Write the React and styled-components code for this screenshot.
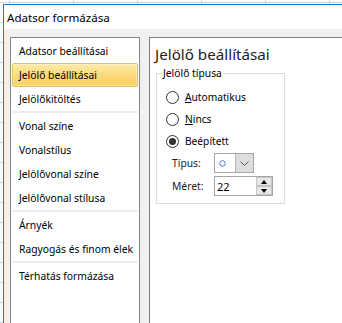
import React from "react";
import styled, { createGlobalStyle, css } from "styled-components";

const GlobalStyle = createGlobalStyle`
  html, body { margin: 0; padding: 0; }
  body { font-family: "Noto Sans", "Open Sans", sans-serif; }
  * { box-sizing: border-box; }
`;

const Page = styled.div`
  width: 342px;
  height: 323px;
  overflow: hidden;
  padding: 4px 0 0 3px;
  background-color: #ffffff;
  background-image:
    repeating-linear-gradient(90deg, transparent 0 9px, #d4d4d4 9px 10px, transparent 10px 64px),
    repeating-linear-gradient(180deg, transparent 0 2px, #d4d4d4 2px 3px, transparent 3px 20px);
`;

const Dialog = styled.div`
  height: 100%;
  display: flex;
  flex-direction: column;
  border-top: 1px solid #1979ca;
  border-left: 1px solid #1979ca;
  background: #f0f0f0;
`;

const TitleBar = styled.div`
  height: 24px;
  flex-shrink: 0;
  display: flex;
  align-items: center;
  padding-left: 3px;
  background: #ffffff;
  color: #000;
  font-size: 11.6px;
`;

const Body = styled.div`
  flex: 1;
  display: flex;
  gap: 9px;
  padding: 8px 0 0 6px;
  min-height: 0;
`;

const List = styled.div`
  width: 130px;
  flex-shrink: 0;
  border: 1px solid #828790;
  border-bottom: none;
  background: #fff;
  padding: 1px;
  display: flex;
  flex-direction: column;
`;

const Item = styled.div`
  height: 24px;
  display: flex;
  align-items: center;
  padding-left: 6px;
  border: 1px solid transparent;
  border-radius: 2px;
  font-size: 10.3px;
  color: #000;
  white-space: nowrap;
  ${(p) =>
    p.$selected &&
    css`
      border-color: #e2bf62;
      background: linear-gradient(#fdeaa8, #fbd877 55%, #fad266);
      box-shadow: inset 0 0 0 1px rgba(255, 255, 255, 0.35);
    `}
`;

const Separator = styled.div`
  height: 2px;
  margin-bottom: 1px;
  background: #eeeef2;
`;

const Panel = styled.div`
  flex: 1;
  border: 1px solid #7f7f7f;
  border-right: none;
  border-bottom: none;
  background: #fff;
  padding: 6px 0 0 5px;
`;

const Heading = styled.h2`
  margin: 0;
  font-size: 15.2px;
  line-height: 21px;
  font-weight: 400;
  color: #1e1e1e;
  white-space: nowrap;
`;

const Group = styled.div`
  position: relative;
  width: 129px;
  margin: 8px 0 0 1px;
  border: 1px solid #dcdcdc;
  padding: 12px 0 7px 9px;
  display: flex;
  flex-direction: column;
`;

const Legend = styled.span`
  position: absolute;
  top: -8px;
  left: 4px;
  padding: 0 2px;
  background: #fff;
  font-size: 10.3px;
  line-height: 15px;
  color: #000;
  white-space: nowrap;
`;

const RadioRow = styled.label`
  height: 22px;
  display: flex;
  align-items: center;
  gap: 6px;
  font-size: 10.2px;
  color: #000;
`;

const RadioCircle = styled.span`
  width: 13px;
  height: 13px;
  border: 1px solid #333;
  border-radius: 50%;
  background: #fff;
  display: grid;
  place-items: center;
  flex-shrink: 0;
  &::after {
    content: "";
    width: 7px;
    height: 7px;
    border-radius: 50%;
    background: ${(p) => (p.$checked ? "#333" : "transparent")};
  }
`;

const FieldRow = styled.div`
  height: 20px;
  display: flex;
  align-items: center;
  padding-left: 6px;
  margin-top: ${(p) => p.$gap}px;
  font-size: 10.3px;
  color: #1b1b1b;
`;

const FieldLabel = styled.span`
  width: 42px;
  flex-shrink: 0;
`;

const Combo = styled.div`
  width: 40px;
  height: 20px;
  display: flex;
  border: 1px solid #a6a6a6;
  background: #fff;
`;

const ComboValue = styled.div`
  flex: 1;
  display: flex;
  align-items: center;
  padding-left: 4px;
`;

const ComboButton = styled.div`
  width: 18px;
  display: grid;
  place-items: center;
  background: #dedede;
  border-left: 1px solid #b4b4b4;
`;

const Spin = styled.div`
  width: 59px;
  height: 20px;
  display: flex;
  border: 1px solid #a6a6a6;
  background: #fff;
`;

const SpinText = styled.div`
  flex: 1;
  display: flex;
  align-items: center;
  padding-left: 2px;
  font-size: 11px;
  color: #000;
`;

const SpinButtons = styled.div`
  width: 16px;
  display: flex;
  flex-direction: column;
`;

const SpinButton = styled.div`
  flex: 1;
  display: grid;
  place-items: center;
  background: #e6e6e6;
  border: 1px solid #c6c6c6;
  &::after {
    content: "";
    width: 0;
    height: 0;
    border-left: 3.5px solid transparent;
    border-right: 3.5px solid transparent;
    ${(p) =>
      p.$down
        ? css`border-top: 4px solid #000;`
        : css`border-bottom: 4px solid #000;`}
  }
`;

const items = [
  ["Adatsor beállításai", "Jelölő beállításai", "Jelölőkitöltés"],
  ["Vonal színe", "Vonalstílus", "Jelölővonal színe", "Jelölővonal stílusa"],
  ["Árnyék", "Ragyogás és finom élek"],
  ["Térhatás formázása"],
];

export default function App() {
  return (
    <>
      <GlobalStyle />
      <Page>
        <Dialog>
          <TitleBar>Adatsor formázása</TitleBar>
          <Body>
            <List>
              {items.map((group, gi) => (
                <React.Fragment key={gi}>
                  {gi > 0 && <Separator />}
                  {group.map((t) => (
                    <Item key={t} $selected={t === "Jelölő beállításai"}>
                      {t}
                    </Item>
                  ))}
                </React.Fragment>
              ))}
            </List>
            <Panel>
              <Heading>Jelölő beállításai</Heading>
              <Group>
                <Legend>Jelölő típusa</Legend>
                <RadioRow>
                  <RadioCircle />
                  <span>
                    <u>A</u>utomatikus
                  </span>
                </RadioRow>
                <RadioRow>
                  <RadioCircle />
                  <span>
                    <u>N</u>incs
                  </span>
                </RadioRow>
                <RadioRow>
                  <RadioCircle $checked />
                  <span>Beépített</span>
                </RadioRow>
                <FieldRow $gap={1}>
                  <FieldLabel>Típus:</FieldLabel>
                  <Combo>
                    <ComboValue>
                      <svg width="7" height="7" viewBox="0 0 7 7">
                        <circle cx="3.5" cy="3.5" r="2.8" fill="none" stroke="#4a7bd0" strokeWidth="1" />
                      </svg>
                    </ComboValue>
                    <ComboButton>
                      <svg width="9" height="5" viewBox="0 0 9 5">
                        <path d="M0.5 0.5 L4.5 4.5 L8.5 0.5" fill="none" stroke="#555" strokeWidth="1" />
                      </svg>
                    </ComboButton>
                  </Combo>
                </FieldRow>
                <FieldRow $gap={3}>
                  <FieldLabel>Méret:</FieldLabel>
                  <Spin>
                    <SpinText>22</SpinText>
                    <SpinButtons>
                      <SpinButton />
                      <SpinButton $down />
                    </SpinButtons>
                  </Spin>
                </FieldRow>
              </Group>
            </Panel>
          </Body>
        </Dialog>
      </Page>
    </>
  );
}
